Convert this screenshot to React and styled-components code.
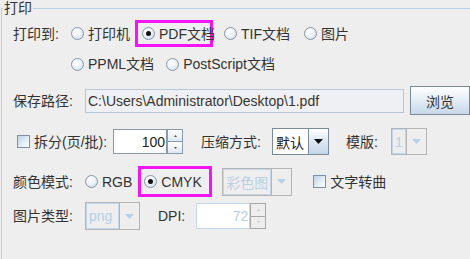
import React from 'react';
import styled, { createGlobalStyle, css } from 'styled-components';

const GlobalStyle = createGlobalStyle`
  html, body { margin: 0; padding: 0; background: #eeeeee; }
  body {
    font-family: "Liberation Sans", "Noto Sans CJK SC", sans-serif;
    font-size: 14px;
    color: #333333;
    overflow: hidden;
  }
  #root { width: 470px; height: 259px; overflow: hidden; }
`;

const Frame = styled.fieldset`
  margin: 0 0 0 1px;
  padding: 0;
  border: 1px solid #b8cfe5;
  width: 520px;
  height: 320px;
  min-width: 0;
  box-sizing: border-box;
`;

const Legend = styled.legend`
  padding: 0 1px;
  margin-left: 1px;
  line-height: 16px;
  height: 16px;
  font-size: 14px;
  color: #333;
`;

const Body = styled.div`
  padding-left: 11px;
`;

const Row = styled.div`
  display: flex;
  align-items: center;
  height: ${p => p.$h}px;
  margin-top: ${p => p.$mt}px;
`;

const Label = styled.span`
  display: inline-block;
  flex: none;
  white-space: nowrap;
  width: ${p => (p.$w ? `${p.$w}px` : 'auto')};
  margin-left: ${p => p.$ml || 0}px;
  line-height: 16px;
`;

const Choice = styled.label`
  display: flex;
  align-items: center;
  gap: 4px;
  flex: none;
  white-space: nowrap;
  margin-left: ${p => p.$ml || 0}px;
  line-height: 16px;
`;

const RadioDot = styled.span`
  width: 13px;
  height: 13px;
  box-sizing: border-box;
  border-radius: 50%;
  border: 1px solid #8797a8;
  background: radial-gradient(circle at 40% 35%, #ffffff 0%, #eef3f9 45%, #c2d4e8 100%);
  display: flex;
  align-items: center;
  justify-content: center;
  flex: none;
  &::after {
    content: '';
    width: 5px;
    height: 5px;
    border-radius: 50%;
    background: #111;
    display: ${p => (p.$on ? 'block' : 'none')};
  }
`;

const CheckBox = styled.span`
  width: 13px;
  height: 13px;
  box-sizing: border-box;
  border: 1px solid #7f8fa0;
  background: linear-gradient(135deg, #bcd0e6 0%, #e4edf6 55%, #ffffff 100%);
  flex: none;
`;

const Highlight = styled.div`
  display: flex;
  align-items: center;
  box-sizing: border-box;
  border: 3px solid #f414f4;
  width: ${p => p.$w}px;
  height: ${p => p.$h}px;
  padding-left: ${p => p.$pl}px;
  margin-left: ${p => p.$ml}px;
  flex: none;
`;

const PathField = styled.div`
  box-sizing: border-box;
  width: ${p => p.$w}px;
  height: 24px;
  border: 1px solid #b7c7d8;
  background: #eef0f3;
  padding-left: 2px;
  display: flex;
  align-items: center;
  color: #3a3530;
  white-space: nowrap;
  overflow: hidden;
  flex: none;
`;

const Button = styled.button`
  box-sizing: border-box;
  width: ${p => p.$w}px;
  height: 29px;
  margin-left: ${p => p.$ml}px;
  border: 1px solid #7a8a99;
  background: linear-gradient(to bottom, #ffffff 0%, #e6eef7 45%, #c6d7ea 100%);
  font: inherit;
  color: #333;
  padding: 0;
  flex: none;
`;

const Combo = styled.div`
  box-sizing: border-box;
  display: flex;
  width: ${p => p.$w}px;
  height: ${p => p.$h}px;
  margin-left: ${p => p.$ml || 0}px;
  flex: none;
  ${p => p.$disabled
    ? css`border: 1px solid #b4b4b4; background: #eeeeee;`
    : css`border: 1px solid #7a8a99; background: #ffffff;`}
`;

const ComboValue = styled.div`
  flex: 1;
  box-sizing: border-box;
  display: flex;
  align-items: center;
  padding-left: 2px;
  white-space: nowrap;
  overflow: hidden;
  ${p => p.$disabled
    ? css`color: #b8cfe5; border: 1px solid #c4d6ea; background: #eeeeee;`
    : css`color: #222; background: #ffffff; border: 1px solid #ffffff;`}
`;

const ComboArrow = styled.div`
  width: 19px;
  flex: none;
  display: flex;
  align-items: center;
  justify-content: center;
  ${p => p.$disabled
    ? css`border-left: 1px solid #b4b4b4; background: #eeeeee;`
    : css`border-left: 1px solid #7a8a99; background: linear-gradient(to bottom, #ffffff 0%, #dde7f2 50%, #c3d5e9 100%);`}
`;

const Spinner = styled.div`
  box-sizing: border-box;
  display: flex;
  width: ${p => p.$w}px;
  height: ${p => p.$h}px;
  margin-left: ${p => p.$ml || 0}px;
  flex: none;
`;

const SpinField = styled.div`
  flex: 1;
  box-sizing: border-box;
  display: flex;
  align-items: center;
  justify-content: flex-end;
  padding-right: 1px;
  background: #ffffff;
  ${p => p.$disabled
    ? css`color: #b8cfe5; border: 1px solid #c4d6ea;`
    : css`color: #222; border: 1px solid #8a9aaa;`}
`;

const SpinButtons = styled.div`
  width: 16px;
  flex: none;
  display: flex;
  flex-direction: column;
`;

const SpinBtn = styled.div`
  flex: 1;
  box-sizing: border-box;
  display: flex;
  align-items: center;
  justify-content: center;
  ${p => p.$disabled
    ? css`border: 1px solid #a8a8a8; background: #eeeeee;`
    : css`border: 1px solid #8a9aaa; background: linear-gradient(to bottom, #ffffff, #dfe8f2);`}
  & + & { border-top: none; }
`;

const Tri = ({ color, w = 9, h = 5, up = false }) => (
  <svg width={w} height={h} viewBox={`0 0 ${w} ${h}`}>
    <polygon
      points={up ? `0,${h} ${w},${h} ${w / 2},0` : `0,0 ${w},0 ${w / 2},${h}`}
      fill={color}
    />
  </svg>
);

const Radio = ({ on, children, ml }) => (
  <Choice $ml={ml}>
    <RadioDot $on={on} />
    <span>{children}</span>
  </Choice>
);

const Check = ({ children, ml }) => (
  <Choice $ml={ml}>
    <CheckBox />
    <span>{children}</span>
  </Choice>
);

const ComboBox = ({ value, w, h = 27, ml, disabled }) => (
  <Combo $w={w} $h={h} $ml={ml} $disabled={disabled}>
    <ComboValue $disabled={disabled}>{value}</ComboValue>
    <ComboArrow $disabled={disabled}>
      <Tri color={disabled ? '#b8cfe5' : '#111'} w={9} h={5} />
    </ComboArrow>
  </Combo>
);

const SpinBox = ({ value, w, h, ml, disabled }) => {
  const c = disabled ? '#b8c4d0' : '#555';
  return (
    <Spinner $w={w} $h={h} $ml={ml}>
      <SpinField $disabled={disabled}>{value}</SpinField>
      <SpinButtons>
        <SpinBtn $disabled={disabled}><Tri color={c} w={3} h={2} up /></SpinBtn>
        <SpinBtn $disabled={disabled}><Tri color={c} w={3} h={2} /></SpinBtn>
      </SpinButtons>
    </Spinner>
  );
};

export default function App() {
  return (
    <>
      <GlobalStyle />
      <Frame>
        <Legend>打印</Legend>
        <Body>
          <Row $mt={4} $h={27}>
            <Label $w={58}>打印到:</Label>
            <Radio>打印机</Radio>
            <Highlight $w={78} $h={27} $pl={4} $ml={5}>
              <Radio on>PDF文档</Radio>
            </Highlight>
            <Radio ml={11}>TIF文档</Radio>
            <Radio ml={14}>图片</Radio>
          </Row>
          <Row $mt={5} $h={24}>
            <Label $w={58} />
            <Radio>PPML文档</Radio>
            <Radio ml={12}>PostScript文档</Radio>
          </Row>
          <Row $mt={10} $h={29}>
            <Label $w={72}>保存路径:</Label>
            <PathField $w={319}>C:\Users\Administrator\Desktop\1.pdf</PathField>
            <Button $w={60} $ml={6}>浏览</Button>
          </Row>
          <Row $mt={13} $h={27}>
            <Check ml={4}>拆分(页/批):</Check>
            <SpinBox value="100" w={70} h={25} ml={6} />
            <Label $ml={18}>压缩方式:</Label>
            <ComboBox value="默认" w={57} ml={11} />
            <Label $ml={17}>模版:</Label>
            <ComboBox value="1" w={36} ml={13} disabled />
          </Row>
          <Row $mt={11} $h={31}>
            <Label $w={72}>颜色模式:</Label>
            <Radio>RGB</Radio>
            <Highlight $w={74} $h={31} $pl={3} $ml={6}>
              <Radio on>CMYK</Radio>
            </Highlight>
            <ComboBox value="彩色图" w={70} h={28} ml={10} disabled />
            <Check ml={21}>文字转曲</Check>
          </Row>
          <Row $mt={5} $h={28}>
            <Label $w={72}>图片类型:</Label>
            <ComboBox value="png" w={55} h={28} disabled />
            <Label $ml={18}>DPI:</Label>
            <SpinBox value="72" w={70} h={26} ml={11} disabled />
          </Row>
        </Body>
      </Frame>
    </>
  );
}
